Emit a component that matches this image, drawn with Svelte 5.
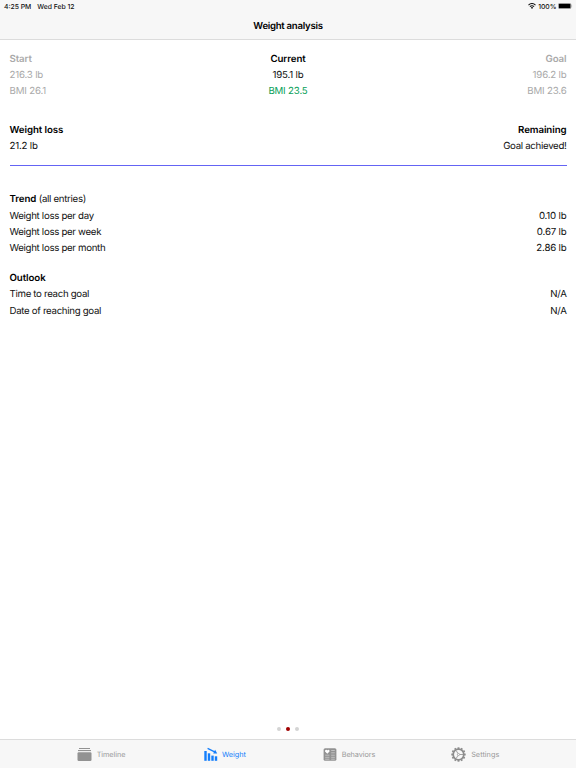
<script>
  const summary = [
    { label: 'Start', weight: '216.3 lb', bmi: 'BMI 26.1', kind: 'start' },
    { label: 'Current', weight: '195.1 lb', bmi: 'BMI 23.5', kind: 'current' },
    { label: 'Goal', weight: '196.2 lb', bmi: 'BMI 23.6', kind: 'goal' }
  ];
  const trend = [
    ['Weight loss per day', '0.10 lb'],
    ['Weight loss per week', '0.67 lb'],
    ['Weight loss per month', '2.86 lb']
  ];
  const outlook = [
    ['Time to reach goal', 'N/A'],
    ['Date of reaching goal', 'N/A']
  ];
  const teeth = Array.from({ length: 12 }, (_, i) => i * 30);
</script>

<div class="screen">
  <header>
    <div class="status">
      <span class="time">4:25 PM</span>
      <span class="date">Wed Feb 12</span>
      <svg class="wifi" width="8" height="6" viewBox="0 0 8 6">
        <path d="M.5 2.1Q4-1 7.5 2.1M1.9 3.6Q4 1.8 6.1 3.6" fill="none" stroke="#111" stroke-width="1.1" />
        <path d="M2.8 4.5Q4 3.6 5.2 4.5L4 5.9Z" fill="#111" />
      </svg>
      <span class="percent">100%</span>
      <svg class="battery" width="15" height="6" viewBox="0 0 15 6">
        <rect x=".25" y=".25" width="12.8" height="5.5" rx="1.5" fill="#fff" stroke="#777" stroke-width=".5" />
        <rect x=".8" y=".7" width="11.7" height="4.6" rx=".9" fill="#000" />
        <path d="M13.7 2Q14.7 3 13.7 4Z" fill="#888" />
      </svg>
    </div>
    <h1>Weight analysis</h1>
  </header>

  <main>
    <section class="summary">
      {#each summary as s}
        <div class={s.kind}>
          <div class="row"><b>{s.label}</b></div>
          <div class="row num">{s.weight}</div>
          <div class="row num bmi">{s.bmi}</div>
        </div>
      {/each}
    </section>

    <section class="progress">
      <div class="row"><b>Weight loss</b><b>Remaining</b></div>
      <div class="row"><span class="num">21.2 lb</span><span>Goal achieved!</span></div>
    </section>
    <div class="rule"></div>

    <section class="trend">
      <div class="row"><span><b>Trend</b> (all entries)</span></div>
      {#each trend as [name, value]}
        <div class="row"><span>{name}</span><span class="num">{value}</span></div>
      {/each}
    </section>

    <section class="outlook">
      <div class="row"><b>Outlook</b></div>
      {#each outlook as [name, value]}
        <div class="row"><span>{name}</span><span>{value}</span></div>
      {/each}
    </section>
  </main>

  <div class="dots"><i></i><i class="on"></i><i></i></div>

  <nav>
    <div class="tab">
      <svg width="15" height="15" viewBox="0 0 15 15" fill="#929292">
        <rect x="2" y="1" width="11" height="1" />
        <rect x="1" y="3" width="13" height="1.1" />
        <rect x="0.5" y="5.2" width="14" height="8.8" rx="1.2" />
      </svg>
      <span>Timeline</span>
    </div>
    <div class="tab active">
      <svg width="14" height="15" viewBox="0 0 14 15" fill="#147efb">
        <rect x=".3" y="4" width="2.4" height="9.8" />
        <rect x="3.8" y="6.3" width="2.4" height="7.5" />
        <rect x="7.3" y="8.6" width="2.4" height="5.2" />
        <rect x="10.8" y="9.3" width="2.4" height="4.5" />
        <path d="M3.6 1.3L11.6 5.3" stroke="#147efb" stroke-width="1.3" />
        <path d="M13.2 6.5L9.2 6.5L11.1 2.7Z" />
      </svg>
      <span>Weight</span>
    </div>
    <div class="tab">
      <svg width="14" height="15" viewBox="0 0 14 15">
        <rect x=".6" y="1.2" width="12.8" height="12.6" rx="1.5" fill="#929292" />
        <path d="M4.3 6.7L2 4.4Q1.8 2.6 3.3 2.7Q4 2.8 4.3 3.4Q4.7 2.7 5.4 2.7Q6.9 2.7 6.5 4.4Z" fill="#fff" />
        <path d="M8.2 3.5h3.6M8.2 5.8h3.6M2.2 8.2h4.2M8.2 8.2h3.6M2.2 10.3h4.2M8.2 10.3h3.6M2.2 12.2h4.2M8.2 12.2h3.6" stroke="#e0e0e0" stroke-width=".6" />
      </svg>
      <span>Behaviors</span>
    </div>
    <div class="tab settings">
      <svg width="15" height="15" viewBox="0 0 15 15">
        <g transform="translate(7.5 7.5)" fill="none" stroke="#8c8c8c">
          {#each teeth as a}
            <path d="M0-5.4V-7.2" stroke-width="1.9" transform={`rotate(${a})`} />
          {/each}
          <circle r="5.3" stroke-width="1.7" />
          <circle r="1.1" stroke-width=".7" />
          <path d="M1.3 0H4.6M-.65-1.1L-2.3-4M-.65 1.1L-2.3 4" stroke-width=".8" />
        </g>
      </svg>
      <span>Settings</span>
    </div>
  </nav>
</div>

<style>
  :global(body) { margin: 0; background: #fff; }
  .screen {
    width: 576px; height: 768px; display: flex; flex-direction: column;
    background: #fff; color: #111;
    font-family: Inter, "Liberation Sans", sans-serif; font-size: 9.7px; letter-spacing: -.32px;
    text-rendering: geometricPrecision;
  }
  header { height: 40px; box-sizing: border-box; background: #f7f7f7; border-bottom: 1px solid #dcdcdc; }
  .status { display: flex; align-items: center; height: 12px; padding: 0 3px 0 4px; font-size: 6.8px; font-weight: 500; white-space: nowrap; letter-spacing: 0; }
  .date { margin-left: 6px; }
  .wifi { margin-left: auto; }
  .percent { margin: 0 1.5px 0 2px; }
  h1 { margin: 7px 0 0; font-size: 9.6px; line-height: 16px; font-weight: 600; text-align: center; color: #000; letter-spacing: -.27px; }
  main { flex: 1; padding: 12px 9.5px 0; }
  b { font-weight: 600; color: #000; letter-spacing: -.08px; }
  .num { letter-spacing: -.18px; }
  .row { height: 16.2px; line-height: 16.2px; display: flex; justify-content: space-between; white-space: pre; }
  .summary { display: grid; grid-template-columns: 1fr 1fr 1fr; }
  .start, .goal, .start b, .goal b { color: #aaa; }
  .current .row { justify-content: center; }
  .goal .row { justify-content: flex-end; }
  .current .bmi { color: #0a9f5a; }
  .progress { margin-top: 22.2px; }
  .rule { margin-top: 9.8px; height: 1px; background: #6464f4; }
  .trend { margin-top: 26.5px; }
  .outlook { margin-top: 14px; }
  .dots { height: 20px; display: flex; justify-content: center; align-items: center; gap: 5px; }
  .dots i { width: 4px; height: 4px; border-radius: 50%; background: #d4d4d4; }
  .dots .on { background: #a00000; }
  nav { height: 29px; box-sizing: border-box; border-top: 1px solid #dcdcdc; background: #f7f7f7; display: grid; grid-template-columns: 124px 123.5px 125px 127.5px; padding-left: 39px; }
  .tab { display: flex; align-items: center; justify-content: center; gap: 5px; font-size: 7.3px; color: #999; letter-spacing: -.06px; }
  .active { color: #147efb; gap: 4.4px; }
  .settings { letter-spacing: .03px; }
</style>
